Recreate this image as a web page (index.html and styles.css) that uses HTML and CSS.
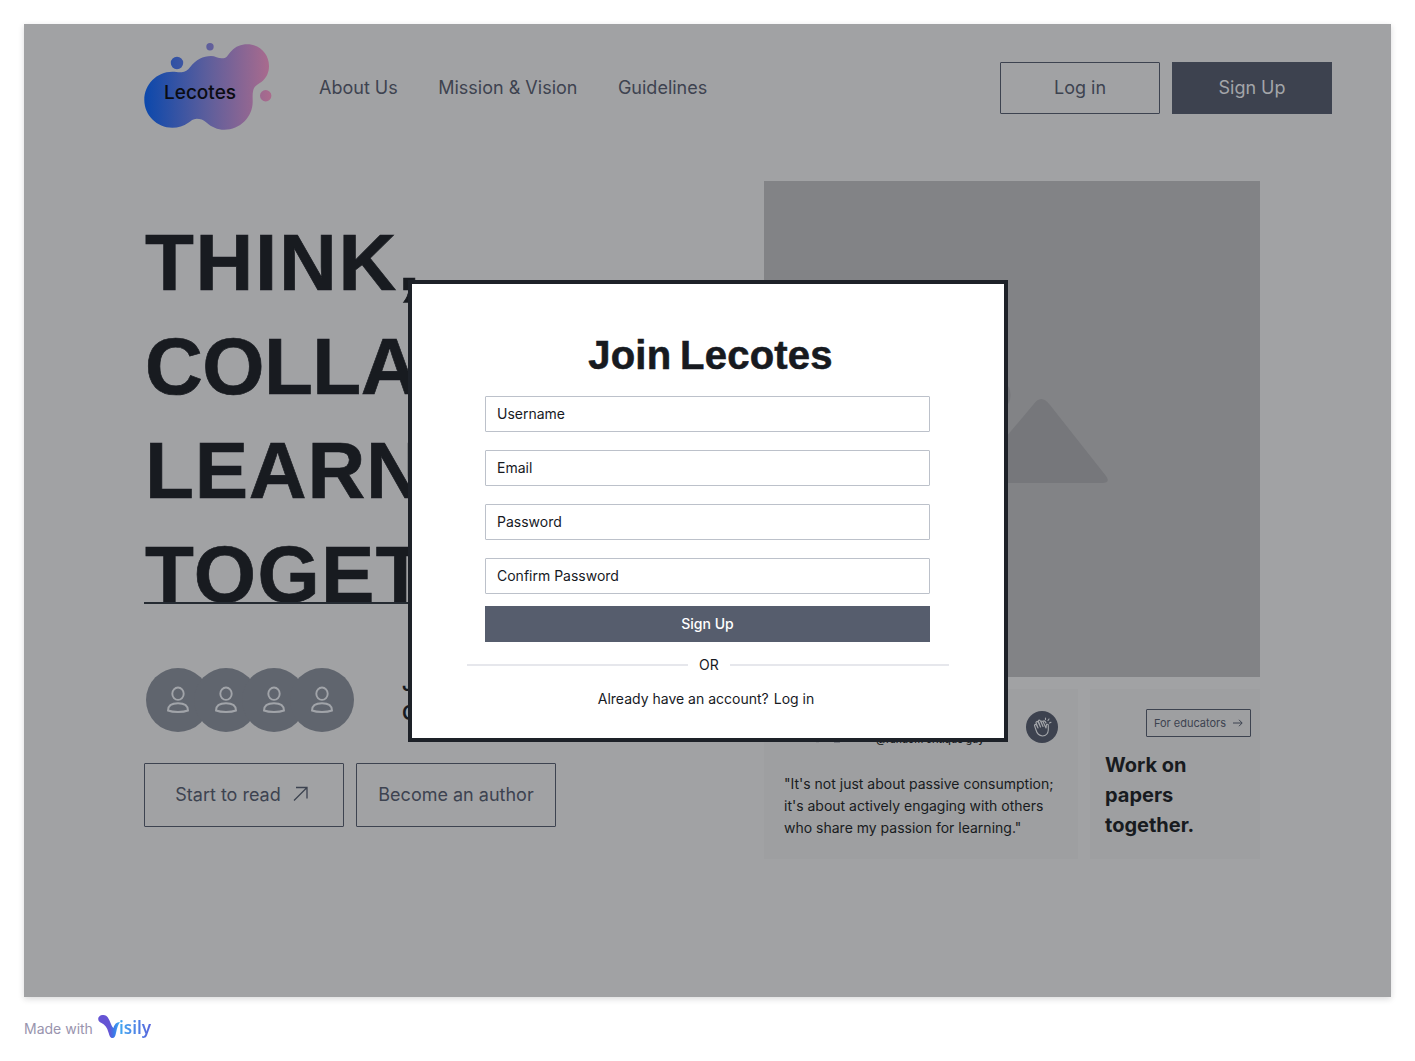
FILE: index.html
```html
<!DOCTYPE html>
<html lang="en">
<head>
<meta charset="utf-8">
<title>Lecotes</title>
<link rel="stylesheet" href="styles.css">
</head>
<body>
<main class="stage">
  <header class="topbar">
    <div class="logo">
      <svg width="128" height="88" viewBox="0 0 128 88">
        <defs><linearGradient id="blob" gradientUnits="userSpaceOnUse" x1="0" y1="0" x2="127" y2="0"><stop offset="0" stop-color="#0b48ac"/><stop offset=".5" stop-color="#5d5e9c"/><stop offset="1" stop-color="#ab6b8d"/></linearGradient></defs>
        <g fill="url(#blob)">
          <path d="M28.3 29.7C32 29.7 34 30.6 37.7 30.3C41 30 44 28 46 25.3C52 17.5 59 14 67 14C71 14 74 16.3 78 16.3C80 16.3 81.500 16 82.700 14.700C84.500 13 85.500 10.500 87.700 8.700C91.500 4.500 97 2.300 103.300 2.300C115.500 2.300 125 12 125 24C125 30.500 122.500 36 117.700 39.700C114 42.500 110.500 43.500 109.300 48C108.300 52 108.700 55 108.700 59.700C108.700 75 96 87.700 80.300 87.700C73.500 87.700 67.500 85 62.700 80.700C59 77.500 56.500 76.700 52.700 76.700C49 76.700 47 79 44.300 80.700C39.500 84 34.500 85.700 28.300 85.700C12.800 85.700 .3 73.300 .3 58C.3 42.300 12.800 29.700 28.300 29.700Z"/>
          <path d="M39.200 21a6.200 6.200 0 1 1-12.400 0a6.200 6.200 0 1 1 12.400 0ZM69.700 4.700a3.700 3.700 0 1 1-7.400 0a3.700 3.700 0 1 1 7.400 0ZM127.400 53.700a5.700 5.700 0 1 1-11.400 0a5.700 5.700 0 1 1 11.400 0Z"/>
        </g>
      </svg>
      <span class="logo-text">Lecotes</span>
    </div>
    <nav class="nav"><a>About Us</a><a>Mission &amp; Vision</a><a>Guidelines</a></nav>
    <div class="auth"><button class="btn">Log in</button><button class="btn solid">Sign Up</button></div>
  </header>

  <div class="hero">
    <section class="intro">
      <h1 class="headline"><span class="l1">THINK,</span><span class="l2">COLLABORATE</span><span class="l3">LEARN</span><span class="l4">TOGETHER</span></h1>
      <div class="community">
        <div class="avatars">
          <span class="avatar"><svg width="24" height="30" viewBox="0 0 24 30"><ellipse cx="12" cy="8.700" rx="5.700" ry="6.200"/><path d="M2 25.500C2 20 6 18.300 12 18.300S22 20 22 25.500C17 27.500 7 27.500 2 25.500Z"/></svg></span>
          <span class="avatar"><svg width="24" height="30" viewBox="0 0 24 30"><ellipse cx="12" cy="8.700" rx="5.700" ry="6.200"/><path d="M2 25.500C2 20 6 18.300 12 18.300S22 20 22 25.500C17 27.500 7 27.500 2 25.500Z"/></svg></span>
          <span class="avatar"><svg width="24" height="30" viewBox="0 0 24 30"><ellipse cx="12" cy="8.700" rx="5.700" ry="6.200"/><path d="M2 25.500C2 20 6 18.300 12 18.300S22 20 22 25.500C17 27.500 7 27.500 2 25.500Z"/></svg></span>
          <span class="avatar"><svg width="24" height="30" viewBox="0 0 24 30"><ellipse cx="12" cy="8.700" rx="5.700" ry="6.200"/><path d="M2 25.500C2 20 6 18.300 12 18.300S22 20 22 25.500C17 27.500 7 27.500 2 25.500Z"/></svg></span>
        </div>
        <p class="join">Join our<br>Community</p>
      </div>
      <div class="actions">
        <button class="btn big start">Start to read<svg width="16" height="16" viewBox="0 0 16 16"><path d="M1 14.500L14 1.500M3 1.500H14V12.500"/></svg></button>
        <button class="btn big">Become an author</button>
      </div>
    </section>

    <section class="showcase">
      <div class="picture">
        <svg width="496" height="496" viewBox="0 0 496 496"><circle cx="228.500" cy="214" r="18"/><path d="M269 224Q277 212 286 224L342 295Q347 302 338 302H158Q148 302 154 294L190 248Q197 240 204 248L226 275Z"/></svg>
      </div>
      <div class="cards">
        <article class="card quote">
          <div class="person">
            <span class="mini"><svg width="32" height="8" viewBox="0 0 32 8"><path d="M3 4.500h3M21 5h6"/></svg></span>
            <span class="handle">@random critique guy</span>
            <span class="clap"><svg width="32" height="32" viewBox="0 0 32 32"><path d="M10 19L8.500 14.500Q9 12.500 10.500 14L12 17L10 11.500Q10.500 9.500 12.200 11.200L14.500 16L12.300 10Q13 8.300 14.500 10L17 15.500L15 10.500Q16 9.300 17.200 11L20 17L20.500 13.500Q22.500 12.500 22.300 15V19Q22 24.500 16.500 25Q11.500 24.500 10 19M17.500 10Q19 9.500 20 12M19.500 8.500V7M22 9.500L23 8M23.500 12L25 11.300"/></svg></span>
          </div>
          <p class="words">"It's not just about passive consumption;<br>it's about actively engaging with others<br>who share my passion for learning."</p>
        </article>
        <article class="card educators">
          <button class="tag">For educators<svg width="10" height="10" viewBox="0 0 10 10"><path d="M0 5H9M6 1.800L9.200 5L6 8.200"/></svg></button>
          <h2 class="work">Work on<br>papers<br>together.</h2>
        </article>
      </div>
    </section>
  </div>

  <div class="modal">
    <h2 class="title">Join Lecotes</h2>
    <form class="form">
      <div class="field">Username</div>
      <div class="field">Email</div>
      <div class="field">Password</div>
      <div class="field">Confirm Password</div>
    </form>
    <button class="submit">Sign Up</button>
    <div class="or">OR</div>
    <p class="account"><span>Already have an account?</span><a>Log in</a></p>
  </div>
</main>
<footer class="made">
  <span class="made-text">Made with</span>
  <svg class="vmark" width="23" height="25" viewBox="0 0 23 25"><defs><linearGradient id="v" x1="0" y1="0" x2="1" y2="0"><stop offset=".5" stop-color="#6554d4"/><stop offset=".72" stop-color="#3b78e8"/><stop offset="1" stop-color="#43b3f5"/></linearGradient></defs><path fill="url(#v)" d="M4.500 1C8 .5 10 3 11.500 6.500C13 10 14 13 15.500 14C16.500 10 18.500 8.300 22 8C20 11 19 14 18 19C17.300 22.500 16.500 24 14.500 24C12 24 11.500 21.500 10.500 18.500C9 13.500 7 10.500 3.500 9C-1.500 7-.5 1.500 4.500 1Z"/></svg>
  <span class="brand">isily</span>
</footer>
</body>
</html>
```
FILE: styles.css
```css
* { box-sizing: border-box; }
body { margin: 0; padding: 24px 24px 0; height: 1061px; overflow: hidden; background: #fff; font-family: Inter, sans-serif; color: #181b20; }
h1, h2, p { margin: 0; }
button { font-family: inherit; padding: 0; margin: 0; border-radius: 0; }

.stage { position: relative; height: 973px; background: #a1a2a4; box-shadow: 0 2px 6px rgba(23, 26, 31, .16); overflow: hidden; }

.topbar { display: flex; height: 157px; padding: 18px 59px 0 120px; }
.logo { position: relative; width: 128px; height: 88px; }
.logo-text { position: absolute; left: 20px; top: 39px; font-size: 19px; line-height: 24px; font-weight: 500; color: #0a0c12; }
.nav { display: flex; gap: 40.5px; margin: 32px 0 0 47px; font-size: 18px; line-height: 28px; color: #3e4350; }
.auth { display: flex; gap: 12px; margin: 20px 0 0 auto; }
.btn { display: flex; align-items: center; justify-content: center; width: 160px; height: 52px; padding-bottom: 2px; border: 1px solid #3d4350; border-radius: 1px; background: transparent; color: #3d4350; font-size: 18px; }
.btn.solid { background: #3d424f; color: #a3a5a9; border-radius: 0; }
.btn svg { margin-left: 12px; fill: none; stroke: currentColor; stroke-width: 1.300; }

.hero { display: flex; justify-content: space-between; padding: 0 131px 0 120px; }
.intro { width: 500px; padding-top: 30px; }
.headline { height: 393px; border-bottom: 2px solid #252b32; font: 700 80px/104px "Liberation Sans", sans-serif; white-space: nowrap; overflow: hidden; color: #181b20; -webkit-text-stroke: .7px #181b20; }
.headline span { display: block; padding-left: 1px; }
.headline .l1 { letter-spacing: 1.700px; }
.headline .l2 { letter-spacing: -.5px; }
.headline .l3 { letter-spacing: .8px; }
.headline .l4 { letter-spacing: 1.400px; }
.community { display: flex; margin-top: 64px; height: 64px; padding-left: 2px; }
.avatars { display: flex; }
.avatar { display: flex; align-items: center; justify-content: center; width: 64px; height: 64px; border-radius: 50%; background: #60656e; }
.avatar + .avatar { margin-left: -16px; }
.avatar svg { fill: none; stroke: #a1a4a9; stroke-width: 1.900; }
.join { margin: 2px 0 0 48px; font-size: 20px; line-height: 29px; font-weight: 600; }
.actions { display: flex; gap: 12px; margin-top: 31px; }
.btn.big { width: 200px; height: 64px; }
.btn.start { padding-right: 4px; }

.showcase { width: 496px; }
.picture { height: 496px; background: #828386; }
.picture svg { display: block; fill: #76777b; }
.cards { display: flex; gap: 12px; margin-top: 12px; }
.card { height: 170px; background: #9e9fa1; }
.quote { width: 314px; padding: 22px 20px 0; }
.person { display: flex; height: 32px; }
.mini { width: 92px; padding: 26px 0 0 29px; }
.mini svg { display: block; fill: none; stroke: #6a6d75; stroke-width: 1.500; }
.handle { padding-top: 19px; font-size: 10.200px; line-height: 18px; font-weight: 500; white-space: nowrap; }
.clap { width: 32px; height: 32px; margin-left: auto; border-radius: 50%; background: #3d424f; }
.clap svg { display: block; fill: none; stroke: #a5a7ab; stroke-width: 1.100; stroke-linecap: round; stroke-linejoin: round; }
.words { margin-top: 30px; font-size: 14px; line-height: 22px; white-space: nowrap; }
.educators { width: 170px; padding: 20px 9px 0 15px; }
.tag { display: flex; align-items: center; justify-content: center; width: 105px; height: 28px; margin-left: auto; border: 1px solid #3d4350; border-radius: 1px; background: transparent; color: #3d4350; font-size: 11px; white-space: nowrap; }
.tag svg { margin-left: 7px; fill: none; stroke: currentColor; }
.work { margin-top: 13px; font-size: 20px; line-height: 30px; font-weight: 700; }

.modal { position: absolute; left: 384px; top: 256px; width: 600px; height: 462px; padding: 48px 55px 0; border: 4px solid #1d2128; background: #fff; color: #171a1f; }
.title { font: 700 40px/46px "Liberation Sans", sans-serif; text-align: center; padding-left: 5px; letter-spacing: .2px; word-spacing: -2.500px; -webkit-text-stroke: .6px #171a1f; }
.form { display: grid; gap: 18px; margin: 18px 19px 0 18px; }
.field { height: 36px; padding-left: 11px; border: 1px solid #bcc1ca; border-radius: 1px; font-size: 14px; line-height: 34px; }
.submit { display: block; width: 445px; height: 36px; margin: 12px 0 0 18px; padding-bottom: 2px; border: 0; background: #565d6d; color: #fff; font-size: 14px; font-weight: 500; }
.or { display: flex; align-items: center; margin-top: 12px; font-size: 14px; line-height: 22px; }
.or::before, .or::after { content: ""; height: 2px; background: #e6e7ec; }
.or::before { width: 221px; margin-right: 11px; }
.or::after { flex: 1; margin-left: 11px; }
.account { display: flex; justify-content: center; gap: 5px; margin-top: 12px; padding-right: 4px; font-size: 14px; line-height: 22px; }

.made { display: flex; height: 64px; padding-top: 17px; }
.made-text { width: 74px; padding-top: 4px; font-size: 14px; line-height: 22px; color: #9994ae; white-space: nowrap; }
.brand { margin: 1px 0 0 -2px; font: 600 17px/26px "Noto Sans", sans-serif; background: linear-gradient(90deg, #42a9f2, #5865dc); background-clip: text; -webkit-background-clip: text; color: transparent; }
```
